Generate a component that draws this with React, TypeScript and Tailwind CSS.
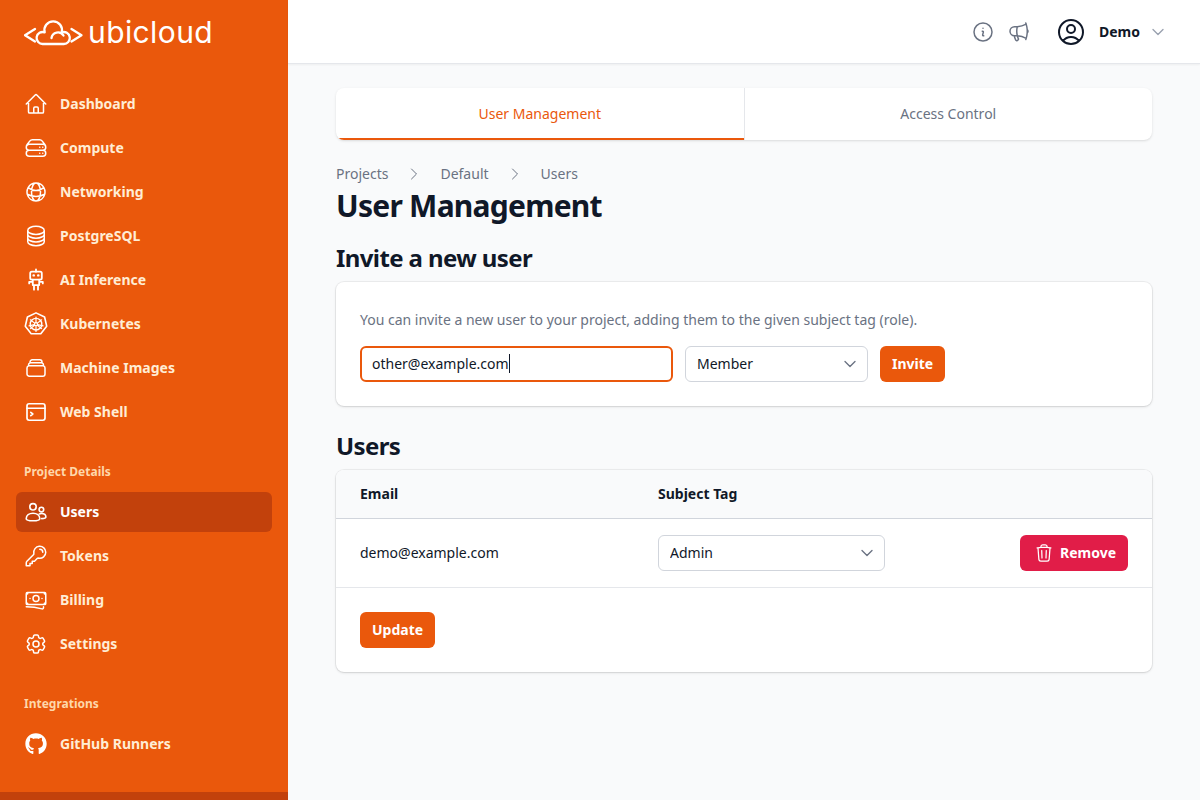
import type { ReactNode } from 'react';
import { FaGithub } from 'react-icons/fa';

function Hero({ d, className = 'size-6', width = 1.5 }: { d: string | string[]; className?: string; width?: number }) {
    const paths = Array.isArray(d) ? d : [d];
    return (
        <svg viewBox="0 0 24 24" fill="none" stroke="currentColor" strokeWidth={width} strokeLinecap="round" strokeLinejoin="round" className={`${className} shrink-0`}>
            {paths.map((p, i) => <path key={i} d={p} />)}
        </svg>
    );
}

const icons = {
    home: 'm2.25 12 8.954-8.955c.44-.439 1.152-.439 1.591 0L21.75 12M4.5 9.75v10.125c0 .621.504 1.125 1.125 1.125H9.75v-4.875c0-.621.504-1.125 1.125-1.125h2.25c.621 0 1.125.504 1.125 1.125V21h4.125c.621 0 1.125-.504 1.125-1.125V9.75M8.25 21h8.25',
    server: 'M5.25 14.25h13.5m-13.5 0a3 3 0 0 1-3-3m3 3a3 3 0 1 0 0 6h13.5a3 3 0 1 0 0-6m-16.5-3a3 3 0 0 1 3-3h13.5a3 3 0 0 1 3 3m-19.5 0a4.5 4.5 0 0 1 .9-2.7L5.737 5.1a3.375 3.375 0 0 1 2.7-1.35h7.126c1.062 0 2.062.5 2.7 1.35l2.587 3.45a4.5 4.5 0 0 1 .9 2.7m0 0a3 3 0 0 1-3 3m0 3h.008v.008h-.008v-.008Zm0-6h.008v.008h-.008v-.008Zm-3 6h.008v.008h-.008v-.008Zm0-6h.008v.008h-.008v-.008Z',
    globe: 'M12 21a9.004 9.004 0 0 0 8.716-6.747M12 21a9.004 9.004 0 0 1-8.716-6.747M12 21c2.485 0 4.5-4.03 4.5-9S14.485 3 12 3m0 18c-2.485 0-4.5-4.03-4.5-9S9.515 3 12 3m0 0a8.997 8.997 0 0 1 7.843 4.582M12 3a8.997 8.997 0 0 0-7.843 4.582m15.686 0A11.953 11.953 0 0 1 12 10.5c-2.998 0-5.74-1.1-7.843-2.918m15.686 0A8.959 8.959 0 0 1 21 12c0 .778-.099 1.533-.284 2.253m0 0A17.919 17.919 0 0 1 12 16.5c-3.162 0-6.133-.815-8.716-2.247m0 0A9.015 9.015 0 0 1 3 12c0-1.605.42-3.113 1.157-4.418',
    database: 'M20.25 6.375c0 2.278-3.694 4.125-8.25 4.125S3.75 8.653 3.75 6.375m16.5 0c0-2.278-3.694-4.125-8.25-4.125S3.75 4.097 3.75 6.375m16.5 0v11.25c0 2.278-3.694 4.125-8.25 4.125s-8.25-1.847-8.25-4.125V6.375m16.5 0v3.75m-16.5-3.75v3.75m16.5 0v3.75C20.25 16.153 16.556 18 12 18s-8.25-1.847-8.25-4.125v-3.75m16.5 0c0 2.278-3.694 4.125-8.25 4.125s-8.25-1.847-8.25-4.125',
    stack: 'M6 6.878V6a2.25 2.25 0 0 1 2.25-2.25h7.5A2.25 2.25 0 0 1 18 6v.878m-12 0c.235-.083.487-.128.75-.128h10.5c.263 0 .515.045.75.128m-12 0A2.25 2.25 0 0 0 4.5 9v.878m13.5-3A2.25 2.25 0 0 1 19.5 9v.878m0 0a2.246 2.246 0 0 0-.75-.128H5.25c-.263 0-.515.045-.75.128m15 0A2.25 2.25 0 0 1 21 12v6a2.25 2.25 0 0 1-2.25 2.25H5.25A2.25 2.25 0 0 1 3 18v-6c0-.98.626-1.813 1.5-2.122',
    key: 'M15.75 5.25a3 3 0 0 1 3 3m3 0a6 6 0 0 1-7.029 5.912c-.563-.097-1.159.026-1.563.43L10.5 17.25H8.25v2.25H6v2.25H2.25v-2.818c0-.597.237-1.17.659-1.591l6.499-6.499c.404-.404.527-1 .43-1.563A6 6 0 1 1 21.75 8.25Z',
    banknotes: 'M2.25 18.75a60.07 60.07 0 0 1 15.797 2.101c.727.198 1.453-.342 1.453-1.096V18.75M3.75 4.5v.75A.75.75 0 0 1 3 6h-.75m0 0v-.375c0-.621.504-1.125 1.125-1.125H20.25M2.25 6v9m18-10.5v.75c0 .414.336.75.75.75h.75m-1.5-1.5h.375c.621 0 1.125.504 1.125 1.125v9.75c0 .621-.504 1.125-1.125 1.125h-.375m1.5-1.5H21a.75.75 0 0 0-.75.75v.75m0 0H3.75m0 0h-.375a1.125 1.125 0 0 1-1.125-1.125V15m1.5 1.5v-.75A.75.75 0 0 0 3 15h-.75M15 10.5a3 3 0 1 1-6 0 3 3 0 0 1 6 0Zm3 0h.008v.008H18V10.5Zm-12 0h.008v.008H6V10.5Z',
    cog: ['M9.594 3.94c.09-.542.56-.94 1.11-.94h2.593c.55 0 1.02.398 1.11.94l.213 1.281c.063.374.313.686.645.87.074.04.147.083.22.127.325.196.72.257 1.075.124l1.217-.456a1.125 1.125 0 0 1 1.37.49l1.296 2.247a1.125 1.125 0 0 1-.26 1.431l-1.003.827c-.293.241-.438.613-.43.992a7.723 7.723 0 0 1 0 .255c-.008.378.137.75.43.991l1.004.827c.424.35.534.955.26 1.43l-1.298 2.247a1.125 1.125 0 0 1-1.369.491l-1.217-.456c-.355-.133-.75-.072-1.076.124a6.47 6.47 0 0 1-.22.128c-.331.183-.581.495-.644.869l-.213 1.281c-.09.543-.56.94-1.11.94h-2.594c-.55 0-1.019-.398-1.11-.94l-.213-1.281c-.062-.374-.312-.686-.644-.87a6.52 6.52 0 0 1-.22-.127c-.325-.196-.72-.257-1.076-.124l-1.217.456a1.125 1.125 0 0 1-1.369-.49l-1.297-2.247a1.125 1.125 0 0 1 .26-1.431l1.004-.827c.292-.24.437-.613.43-.991a6.932 6.932 0 0 1 0-.255c.007-.38-.138-.751-.43-.992l-1.004-.827a1.125 1.125 0 0 1-.26-1.43l1.297-2.247a1.125 1.125 0 0 1 1.37-.491l1.216.456c.356.133.751.072 1.076-.124.072-.044.146-.086.22-.128.332-.183.582-.495.644-.869l.214-1.28Z', 'M15 12a3 3 0 1 1-6 0 3 3 0 0 1 6 0Z'],
    info: 'm11.25 11.25.041-.02a.75.75 0 0 1 1.063.852l-.708 2.836a.75.75 0 0 0 1.063.853l.041-.021M21 12a9 9 0 1 1-18 0 9 9 0 0 1 18 0Zm-9-3.75h.008v.008H12V8.25Z',
    megaphone: 'M10.34 15.84c-.688-.06-1.386-.09-2.09-.09H7.5a4.5 4.5 0 1 1 0-9h.75c.704 0 1.402-.03 2.09-.09m0 9.18c.253.962.584 1.892.985 2.783.247.55.06 1.21-.463 1.511l-.657.38c-.551.318-1.26.117-1.527-.461a20.845 20.845 0 0 1-1.44-4.282m3.102.069a18.03 18.03 0 0 1-.59-4.59c0-1.586.205-3.124.59-4.59m0 9.18a23.848 23.848 0 0 1 8.835 2.535M10.34 6.66a23.847 23.847 0 0 0 8.835-2.535m0 0A23.74 23.74 0 0 0 18.795 3m.38 1.125a23.91 23.91 0 0 1 1.014 5.395m-1.014 8.855c-.118.38-.245.754-.38 1.125m.38-1.125a23.91 23.91 0 0 0 1.014-5.395m0-3.46c.495.413.811 1.035.811 1.73 0 .695-.316 1.317-.811 1.73m0-3.46a24.347 24.347 0 0 1 0 3.46',
    userCircle: 'M17.982 18.725A7.488 7.488 0 0 0 12 15.75a7.488 7.488 0 0 0-5.982 2.975m11.963 0a9 9 0 1 0-11.963 0m11.963 0A8.966 8.966 0 0 1 12 21a8.966 8.966 0 0 1-5.982-2.275M15 9.75a3 3 0 1 1-6 0 3 3 0 0 1 6 0Z',
    trash: 'm14.74 9-.346 9m-4.788 0L9.26 9m9.968-3.21c.342.052.682.107 1.022.166m-1.022-.165L18.16 19.673a2.25 2.25 0 0 1-2.244 2.077H8.084a2.25 2.25 0 0 1-2.244-2.077L4.772 5.79m14.456 0a48.108 48.108 0 0 0-3.478-.397m-12 .562c.34-.059.68-.114 1.022-.165m0 0a48.11 48.11 0 0 1 3.478-.397m7.5 0v-.916c0-1.18-.91-2.164-2.09-2.201a51.964 51.964 0 0 0-3.32 0c-1.18.037-2.09 1.022-2.09 2.201v.916m7.5 0a48.667 48.667 0 0 0-7.5 0',
    chevronDown: 'm19.5 8.25-7.5 7.5-7.5-7.5',
    chevronRight: 'm8.25 4.5 7.5 7.5-7.5 7.5',
};

function RobotIcon() {
    return (
        <svg viewBox="0 0 24 24" fill="none" stroke="currentColor" strokeWidth={1.8} strokeLinecap="round" strokeLinejoin="round" className="size-6 shrink-0">
            <path d="M12 1.5v2.2" />
            <rect x="6.2" y="3.7" width="11.6" height="8" rx="1.6" />
            <path d="M9.6 7.4h.2M14.2 7.4h.2" strokeWidth={2.4} />
            <path d="M8.8 11.7v5.4h6.4v-5.4M8.8 13.8H5.2v1.6M15.2 13.8h3.6v1.6M10 17.1v4.6M14 17.1v4.6" />
        </svg>
    );
}

function KubeIcon() {
    return (
        <svg viewBox="0 0 24 24" fill="none" stroke="currentColor" strokeLinejoin="round" strokeLinecap="round" className="size-6 shrink-0">
            <path d="M12 .9l8.6 4.1 2.1 9.3-5.9 7.5H7.2l-5.9-7.5L3.4 5z" strokeWidth={1.6} />
            <circle cx="12" cy="12.2" r="5.8" strokeWidth={1.4} />
            <circle cx="12" cy="12.2" r="1.5" strokeWidth={1.3} />
            <path d="M12 5v5.4M12 14v5.4M6.4 7.8l4.2 3.3M13.4 13.3l4.2 3.3M17.6 7.8l-4.2 3.3M10.6 13.3l-4.2 3.3M5 13.8l5.3-1.2M13.7 12.6l5.3 1.2" strokeWidth={1.2} />
        </svg>
    );
}

function ShellIcon() {
    return (
        <svg viewBox="0 0 24 24" fill="none" stroke="currentColor" strokeWidth={1.7} strokeLinecap="round" strokeLinejoin="round" className="size-6 shrink-0">
            <rect x="3" y="3.75" width="18" height="16.5" rx="2.2" />
            <path d="M3 8.25h18M6.8 12.4l2 1.6-2 1.6" />
        </svg>
    );
}

function UsersIcon() {
    return (
        <svg viewBox="0 0 24 24" fill="none" stroke="currentColor" strokeWidth={1.6} strokeLinecap="round" strokeLinejoin="round" className="size-6 shrink-0">
            <circle cx="9" cy="6.8" r="3.2" />
            <circle cx="17.4" cy="9.6" r="2.3" />
            <path d="M2.2 18.8c0-3.5 3-5.6 6.8-5.6s6.8 2.1 6.8 5.6c0 1.2-3 2-6.8 2s-6.8-.8-6.8-2Z" />
            <path d="M15.3 14c.7-.3 1.4-.5 2.2-.5 2.6 0 4.4 1.5 4.4 3.6 0 .9-1.6 1.5-4.3 1.5" />
        </svg>
    );
}

function Logo() {
    return (
        <div className="flex items-start h-8 text-white">
            <svg viewBox="0 0 60 26" fill="none" stroke="currentColor" strokeWidth={2.3} strokeLinecap="round" strokeLinejoin="round" className="w-[60px] h-[26px] mt-1 shrink-0">
                <path d="M11 9 1 15.2l10 6.3M47.5 9l10 6.2-10 6.3" />
                <path d="M19 24A6 6 0 1 1 20.7 12.4A8.8 8.8 0 1 1 37.7 12.4A6 6 0 1 1 39.5 24Z" />
                <path d="M27.5 18a6.5 6.5 0 0 1 12-2.5" />
            </svg>
            <span className="ml-[4px] text-[30px] leading-8 font-['Inter',sans-serif] font-normal tracking-[0.4px]">ubicloud</span>
        </div>
    );
}

function NavItem({ icon, label, active }: { icon: ReactNode; label: string; active?: boolean }) {
    return (
        <a className={`flex items-center gap-3 h-10 px-2 rounded-md text-sm font-bold leading-6 ${active ? 'bg-[#c2410c] text-white' : 'text-[#ffedd5]'}`}>
            <span className="text-white">{icon}</span>
            {label}
        </a>
    );
}

function SelectBox({ value, className }: { value: string; className: string }) {
    return (
        <div className={`relative ${className}`}>
            <select defaultValue={value} className="appearance-none w-full h-9 pl-[11px] pr-8 rounded-md border border-gray-300 bg-white text-sm text-gray-900 outline-none">
                <option>Admin</option>
                <option>Member</option>
            </select>
            <span className="absolute right-[10px] top-[10px] text-gray-500 pointer-events-none">
                <Hero d={icons.chevronDown} className="size-4" width={2} />
            </span>
        </div>
    );
}

export default function App() {
    return (
        <div className="flex h-screen overflow-hidden bg-gray-50 font-['Noto_Sans',sans-serif] text-gray-900">
            <aside className="w-72 shrink-0 flex flex-col bg-[#ea580c]">
                <div className="flex-1 px-4 pt-4">
                    <div className="px-2 h-8 mb-[36px]">
                        <Logo />
                    </div>
                    <nav className="flex flex-col gap-1">
                        <NavItem icon={<Hero d={icons.home} />} label="Dashboard" />
                        <NavItem icon={<Hero d={icons.server} />} label="Compute" />
                        <NavItem icon={<Hero d={icons.globe} />} label="Networking" />
                        <NavItem icon={<Hero d={icons.database} />} label="PostgreSQL" />
                        <NavItem icon={<RobotIcon />} label="AI Inference" />
                        <NavItem icon={<KubeIcon />} label="Kubernetes" />
                        <NavItem icon={<Hero d={icons.stack} />} label="Machine Images" />
                        <NavItem icon={<ShellIcon />} label="Web Shell" />
                    </nav>
                    <div className="px-2 mt-[30px] mb-[10px] text-xs font-bold leading-5 text-[#fed7aa]">Project Details</div>
                    <nav className="flex flex-col gap-1">
                        <NavItem icon={<UsersIcon />} label="Users" active />
                        <NavItem icon={<Hero d={icons.key} />} label="Tokens" />
                        <NavItem icon={<Hero d={icons.banknotes} />} label="Billing" />
                        <NavItem icon={<Hero d={icons.cog} />} label="Settings" />
                    </nav>
                    <div className="px-2 mt-[30px] mb-[10px] text-xs font-bold leading-5 text-[#fed7aa]">Integrations</div>
                    <NavItem icon={<span className="size-6 flex items-center justify-center"><FaGithub className="size-[22px]" /></span>} label="GitHub Runners" />
                </div>
                <div className="h-2 bg-[#c2410c]" />
            </aside>

            <div className="flex-1 min-w-0 flex flex-col">
                <header className="h-16 shrink-0 flex items-center justify-end pr-[34px] bg-white border-b border-gray-200 shadow-xs">
                    <span className="text-gray-500"><Hero d={icons.info} /></span>
                    <span className="ml-3 text-gray-500"><Hero d={icons.megaphone} /></span>
                    <span className="ml-6 text-gray-900"><Hero d={icons.userCircle} className="size-8" /></span>
                    <span className="ml-3 text-sm font-bold">Demo</span>
                    <span className="ml-[10px] text-gray-400"><Hero d={icons.chevronDown} className="size-4" width={2} /></span>
                </header>

                <main className="flex-1 px-12 pt-6">
                    <div className="flex h-[52px] rounded-lg bg-white shadow-sm text-sm overflow-hidden">
                        <a className="flex-1 flex items-center justify-center text-[#ea580c] border-y-2 border-t-transparent border-b-[#ea580c]">User Management</a>
                        <a className="flex-1 flex items-center justify-center text-gray-500 border-l border-gray-200">Access Control</a>
                    </div>

                    <div className="flex items-center mt-6 text-sm leading-5 text-gray-500">
                        <span>Projects</span>
                        <span className="mx-[18px] text-gray-500"><Hero d={icons.chevronRight} className="size-4" /></span>
                        <span>Default</span>
                        <span className="mx-[18px] text-gray-500"><Hero d={icons.chevronRight} className="size-4" /></span>
                        <span>Users</span>
                    </div>
                    <h1 className="text-[30px] leading-9 font-bold tracking-tight mt-1">User Management</h1>

                    <h2 className="text-2xl leading-8 font-bold tracking-tight mt-[18px]">Invite a new user</h2>
                    <section className="mt-2 p-6 rounded-lg bg-white shadow-sm ring-1 ring-black/5">
                        <p className="text-sm leading-6 text-gray-500 mt-[2px]">You can invite a new user to your project, adding them to the given subject tag (role).</p>
                        <div className="flex gap-3 mt-[14px]">
                            <div className="relative w-[313px]">
                                <input defaultValue="other@example.com" className="w-full h-9 px-[10px] pb-px rounded-md bg-white text-sm text-gray-900 border-2 border-[#ea580c] outline-none" />
                                {/* text caret, frozen in the shot */}
                                <span className="absolute left-[149px] top-[8px] w-px h-[19px] bg-gray-900" />
                            </div>
                            <SelectBox value="Member" className="w-[183px]" />
                            <button className="h-9 px-3 rounded-md bg-[#ea580c] text-sm font-bold text-white">Invite</button>
                        </div>
                    </section>

                    <h2 className="text-2xl leading-8 font-bold tracking-tight mt-6">Users</h2>
                    <section className="mt-2 rounded-lg bg-white shadow-sm ring-1 ring-black/5 overflow-hidden">
                        <div className="flex items-center h-[49px] px-6 bg-gray-50 border-b border-gray-300 text-sm font-bold">
                            <div className="w-[298px]">Email</div>
                            <div>Subject Tag</div>
                        </div>
                        <div className="flex items-center h-[69px] px-6 border-b border-gray-200 text-sm">
                            <div className="w-[298px]">demo@example.com</div>
                            <SelectBox value="Admin" className="w-[227px]" />
                            <button className="ml-auto flex items-center gap-[6px] h-9 pl-[14px] pr-3 rounded-md bg-[#e11d48] font-bold text-white">
                                <Hero d={icons.trash} className="size-5" />
                                Remove
                            </button>
                        </div>
                        <div className="p-6">
                            <button className="h-9 px-3 rounded-md bg-[#ea580c] text-sm font-bold text-white">Update</button>
                        </div>
                    </section>
                </main>
            </div>
        </div>
    );
}
